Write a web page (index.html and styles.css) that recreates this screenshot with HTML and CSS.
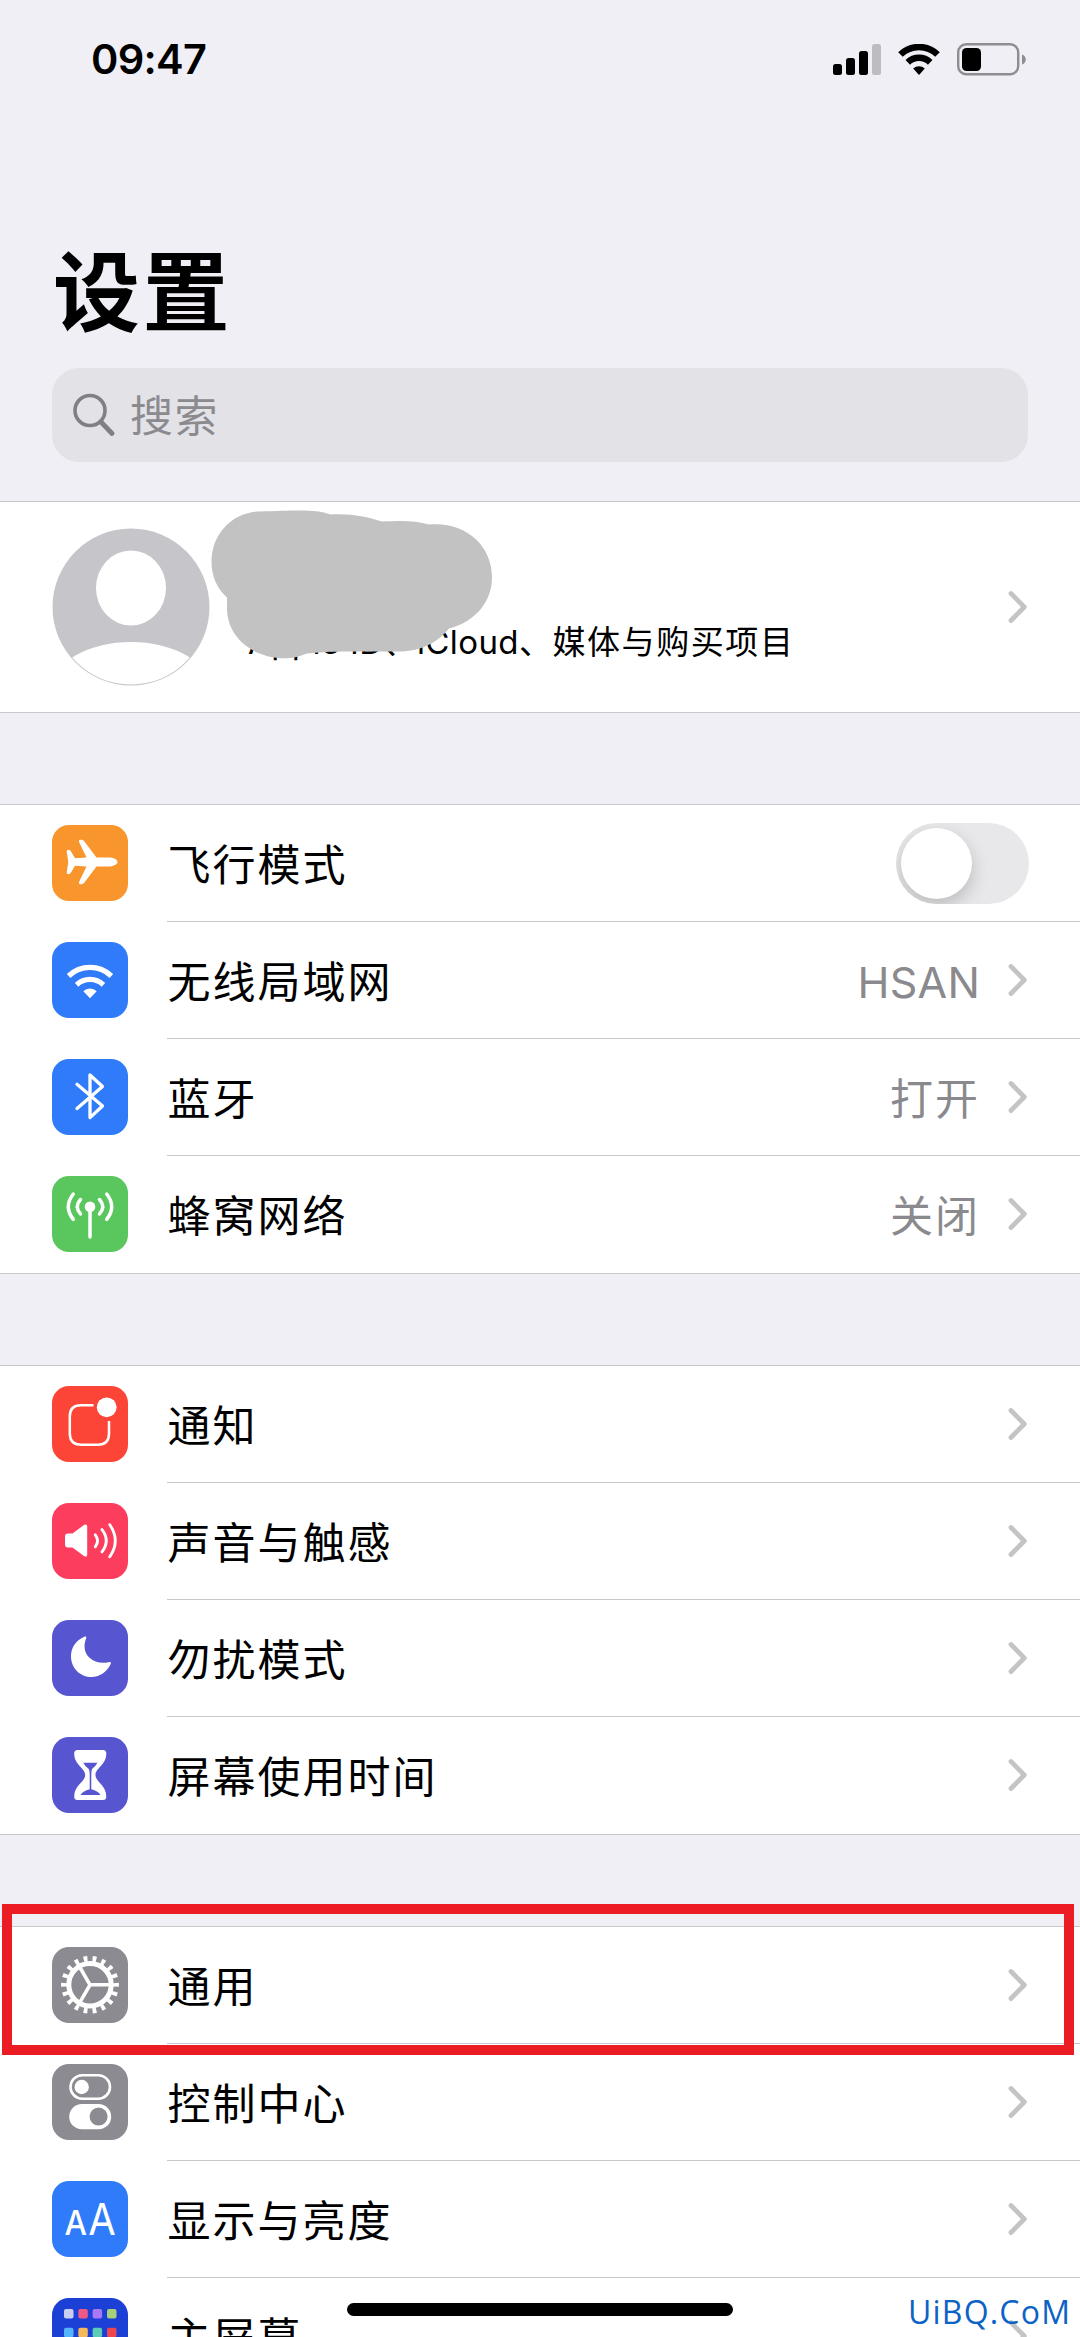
FILE: index.html
```html
<!DOCTYPE html>
<html lang="zh-CN">
<head>
<meta charset="utf-8">
<title>设置</title>
<link rel="stylesheet" href="styles.css">
</head>
<body>
<svg class="defs" aria-hidden="true">
  <symbol id="chevron" viewBox="0 0 20 34"><path d="M3 3.5 16.3 17 3 30.5" fill="none" stroke="#c4c4c6" stroke-width="4.8" stroke-linecap="round" stroke-linejoin="round"/></symbol>
</svg>
<div class="screen">
  <header class="header">
    <div class="status">
      <span class="time">09:47</span>
      <div class="status-icons">
        <svg class="signal" width="48" height="31" viewBox="0 0 48 31"><rect y="20" width="9" height="11" rx="2.5"/><rect x="13" y="14" width="9" height="17" rx="2.5"/><rect x="26" y="7" width="9" height="24" rx="2.5"/><rect x="39" width="9" height="31" rx="2.5" fill="#bdbdc1"/></svg>
        <svg class="wifi" width="42" height="31" viewBox="0 0 42 31"><g fill="none" stroke="#000" stroke-width="6.5"><path d="M2.5 10.500a26.500 26.500 0 0 1 37 0"/><path d="M9.800 18.300a16.200 16.200 0 0 1 22.400 0"/></g><path d="M15.200 24.600a8.600 8.600 0 0 1 11.600 0L21 31z"/></svg>
        <svg class="battery" width="69" height="33" viewBox="0 0 69 33"><rect x="1.2" y="1.2" width="60" height="30" rx="8" fill="none" stroke="#8e8e92" stroke-width="2.4"/><rect x="5" y="5" width="19" height="23" rx="4.5"/><path d="M65 11.500c5 1.500 5 8.500 0 10z" fill="#8e8e92"/></svg>
      </div>
    </div>
    <h1 class="title">设置</h1>
    <div class="search">
      <svg width="42" height="44" viewBox="0 0 42 44" fill="none" stroke="#808084" stroke-linecap="round"><circle cx="17" cy="17.500" r="15" stroke-width="3.600"/><path d="M28.500 29.500 39 40.500" stroke-width="4.800"/></svg>
      <span class="placeholder">搜索</span>
    </div>
  </header>

  <section class="profile">
    <svg class="avatar" width="158" height="158" viewBox="0 0 158 158"><defs><clipPath id="face"><circle cx="79" cy="79" r="77.600"/></clipPath></defs><circle cx="79" cy="79" r="78.500" fill="#c6c5ca"/><g clip-path="url(#face)" fill="#fff"><ellipse cx="79" cy="60" rx="35" ry="37.600"/><ellipse cx="79" cy="159" rx="78" ry="45"/></g></svg>
    <div class="account">Apple ID、iCloud、<span class="media">媒体与购买项目</span></div>
    <svg class="chev"><use href="#chevron"/></svg>
    <svg class="scribble" width="282" height="149" viewBox="211 509.500 282 149"><path d="M260 511C297 510 315 508.500 330.600 514C352 513 366 516 382 521C402 520 416 520 429 524C466 521 492 545 492 577C492 602 474 622 449 628C438 642 420 651 399.500 651H350C328 651 317 652 306.500 653C300 656 293 657.700 285 657.700C252 657.700 227 636 227 608V597C217 588 211.500 576 211.500 561C211.500 533 233 511 260 511Z" fill="#c2c2c2"/></svg>
  </section>

  <section class="group">
    <div class="row">
      <svg class="icon orange" viewBox="0 0 76 76"><path d="M15.500 25C17.500 24.500 18.500 25.500 19.300 27L23 33.300 34.500 32.600 27.300 17.500C26.500 15.500 27 14.800 28.500 14.800 30.500 14.800 31.500 15.300 32.600 16.800L44.500 32.600H58C62.500 33 65.500 35 65.500 37S62.500 41 58 41.400H44.500L32.600 57.200C31.500 58.700 30.500 59.200 28.500 59.200 27 59.200 26.500 58.500 27.300 56.500L34.500 41.400 23 40.700 19.300 47C18.500 48.500 17.500 49.500 15.500 49Q14.700 48.500 14.700 47.500L16.300 37 14.700 26.500Q14.700 25.500 15.500 25Z"/></svg>
      <div class="cell"><span class="label">飞行模式</span><span class="toggle"></span></div>
    </div>
    <div class="row">
      <svg class="icon blue" viewBox="0 0 76 76"><g fill="none" stroke="#fff" stroke-width="5.200"><path d="M16.600 34a31 31 0 0 1 42.800 0"/><path d="M24.600 42.800a19.500 19.500 0 0 1 26.800 0"/></g><path d="M31.300 49.200a9.500 9.500 0 0 1 13.400 0L38 56.300z"/></svg>
      <div class="cell"><span class="label">无线局域网</span><span class="value latin">HSAN</span><svg class="chev"><use href="#chevron"/></svg></div>
    </div>
    <div class="row">
      <svg class="icon blue" viewBox="0 0 76 76"><path d="M25 25.300 50.500 47 38 58.600V16L50.500 27.500 25 49.500" fill="none" stroke="#fff" stroke-width="3.300" stroke-linecap="round" stroke-linejoin="round"/></svg>
      <div class="cell"><span class="label">蓝牙</span><span class="value">打开</span><svg class="chev"><use href="#chevron"/></svg></div>
    </div>
    <div class="row">
      <svg class="icon green" viewBox="0 0 76 76"><circle cx="38" cy="30.700" r="5.300"/><g fill="none" stroke="#fff" stroke-width="3.500" stroke-linecap="round"><path d="M38 31V61"/><path d="M28.500 23.500q-6.500 7.200 0 14.400M47.500 23.500q6.500 7.200 0 14.400M21.300 18q-10 12.700 0 25.400M54.700 18q10 12.700 0 25.400"/></g></svg>
      <div class="cell"><span class="label">蜂窝网络</span><span class="value">关闭</span><svg class="chev"><use href="#chevron"/></svg></div>
    </div>
  </section>

  <section class="group">
    <div class="row">
      <svg class="icon red" viewBox="0 0 76 76"><path d="M41.500 19.300H29Q17.800 19.300 17.800 30.500V47.500Q17.800 58.700 29 58.700H46Q57 58.700 57 47.500V35" fill="none" stroke="#fff" stroke-width="2.500"/><circle cx="54.700" cy="21.300" r="9.900"/></svg>
      <div class="cell"><span class="label">通知</span><svg class="chev"><use href="#chevron"/></svg></div>
    </div>
    <div class="row">
      <svg class="icon pink" viewBox="0 0 76 76"><path d="M16 30.500H20.500L32.300 21.800Q35.200 20.500 35.200 23.300V51.700Q35.200 54.500 32.300 53.200L20.500 44.500H16Q13 44.500 13 41.500V33.500Q13 30.500 16 30.500Z"/><path d="M43.300 31.800q4.600 6 0 12M50 26.600q8.500 11.100 0 22.200M57.800 21.800q11 16 0 32" fill="none" stroke="#fff" stroke-width="2.900" stroke-linecap="round"/></svg>
      <div class="cell"><span class="label">声音与触感</span><svg class="chev"><use href="#chevron"/></svg></div>
    </div>
    <div class="row">
      <svg class="icon purple" viewBox="0 0 76 76"><path d="M32.800 16.600C24.500 19.800 19 27.200 19 36.200 19 48 28 57 39.700 57 48 57 55.500 51.500 58.800 43.800 59.300 42.300 58.500 41.600 57.200 42 44 45.500 32.500 37.500 32.500 26.500 32.500 23.500 33.300 20.500 34.200 18.200 34.600 16.900 34 16.200 32.800 16.600Z"/></svg>
      <div class="cell"><span class="label">勿扰模式</span><svg class="chev"><use href="#chevron"/></svg></div>
    </div>
    <div class="row">
      <svg class="icon purple" viewBox="0 0 76 76"><path d="M25.500 13H51Q54.300 13 54.300 16.500C54.300 28 43.500 31 43.500 38S54.300 48 54.300 59.500Q54.300 63 51 63H25.500Q22.200 63 22.200 59.500C22.200 48 33.200 45 33.200 38S22.200 28 22.200 16.500Q22.200 13 25.500 13Z"/><path d="M31.300 25.800H45.500Q43.500 29.500 40.300 31.800Q39.300 33 39.300 38.500V52.300Q46 54 48.500 58H28.500Q31 54 37.700 52.300V38.500Q37.700 33 36.500 31.800Q33 29.500 31.300 25.800Z" fill="#5855d0"/></svg>
      <div class="cell"><span class="label">屏幕使用时间</span><svg class="chev"><use href="#chevron"/></svg></div>
    </div>
  </section>

  <section class="group">
    <div class="row">
      <svg class="icon gray" viewBox="0 0 76 76"><g fill="none" stroke="#fff"><circle cx="38" cy="37.800" r="21.200" stroke-width="5"/><circle cx="38" cy="37.800" r="26" stroke-width="5.800" pathLength="180" stroke-dasharray="4.200 5.800" stroke-dashoffset="2.100"/><path d="M38 37.800H58M38 37.800 28 20.500M38 37.800 28 55.100" stroke-width="3.600"/></g></svg>
      <div class="cell"><span class="label">通用</span><svg class="chev"><use href="#chevron"/></svg></div>
    </div>
    <div class="row">
      <svg class="icon gray" viewBox="0 0 76 76"><rect x="18.500" y="11.200" width="39.500" height="23.500" rx="11.750" fill="none" stroke="#fff" stroke-width="2.600"/><circle cx="29.700" cy="23" r="7.200"/><rect x="17.200" y="40" width="42" height="25.300" rx="12.650"/><circle cx="46.600" cy="52.600" r="9" fill="#8c8b91"/></svg>
      <div class="cell"><span class="label">控制中心</span><svg class="chev"><use href="#chevron"/></svg></div>
    </div>
    <div class="row">
      <svg class="icon blue" viewBox="0 0 76 76"><text x="12.500" y="53.500" font-size="34" font-weight="500" textLength="22.500" lengthAdjust="spacingAndGlyphs">A</text><text x="36.300" y="53.500" font-size="43.500" textLength="27.500" lengthAdjust="spacingAndGlyphs">A</text></svg>
      <div class="cell"><span class="label">显示与亮度</span><svg class="chev"><use href="#chevron"/></svg></div>
    </div>
    <div class="row">
      <svg class="icon navy" viewBox="0 0 76 76"><rect x="12" y="11" width="9.500" height="9.500" rx="2" fill="#c9cdf0"/><rect x="26.300" y="11" width="9.500" height="9.500" rx="2" fill="#ee5a85"/><rect x="40.600" y="11" width="9.500" height="9.500" rx="2" fill="#a978f5"/><rect x="55" y="11" width="9.500" height="9.500" rx="2" fill="#a9cf78"/><rect x="12" y="29.700" width="9.500" height="9.500" rx="2" fill="#55b4fa"/><rect x="26.300" y="29.700" width="9.500" height="9.500" rx="2" fill="#f5b95a"/><rect x="40.600" y="29.700" width="9.500" height="9.500" rx="2" fill="#5acdb4"/><rect x="55" y="29.700" width="9.500" height="9.500" rx="2" fill="#f0464f"/></svg>
      <div class="cell"><span class="label">主屏幕</span><svg class="chev"><use href="#chevron"/></svg></div>
    </div>
  </section>

  <div class="highlight"></div>
  <div class="home-indicator"></div>
  <div class="watermark">UiBQ.CoM</div>
</div>
</body>
</html>
```
FILE: styles.css
```css
* { box-sizing: border-box; }
body { margin: 0; }
.defs { display: none; }
svg { display: block; flex: none; }

.screen {
  position: relative;
  width: 1080px;
  height: 2337px;
  overflow: hidden;
  background: #f0eff5;
  color: #000;
  font-family: Inter, "Noto Sans CJK SC", sans-serif;
}

.header { height: 501px; padding: 0 52px; }
.status {
  display: flex;
  justify-content: space-between;
  align-items: center;
  height: 118px;
  padding-left: 39px;
}
.time { font-size: 41.500px; font-weight: 600; letter-spacing: -0.700px; }
.status-icons { display: flex; align-items: center; margin-right: 2px; }
.wifi { margin-left: 17px; }
.battery { margin-left: 17px; }

.title {
  margin: 114px 0 0 1px;
  height: 124px;
  line-height: 124px;
  font-size: 87px;
  font-weight: 700;
  letter-spacing: 2.500px;
}
.search {
  display: flex;
  align-items: center;
  gap: 15px;
  height: 94px;
  margin-top: 12px;
  padding-left: 21px;
  border-radius: 27px;
  background: #e3e2e7;
  color: #8b8b8f;
  font-size: 43px;
  letter-spacing: 1.500px;
}
.placeholder { padding-bottom: 4px; }

.profile {
  position: relative;
  display: flex;
  align-items: center;
  height: 212px;
  padding: 0 51px 0 52px;
  background: #fff;
  border-top: 1px solid #c8c7cc;
  border-bottom: 1px solid #c8c7cc;
}
.account {
  flex: 1;
  margin: 70px 0 0 38px;
  font-size: 33px;
  line-height: 44px;
  letter-spacing: 0.400px;
  white-space: nowrap;
}
.media { letter-spacing: 1.600px; }
.scribble { position: absolute; left: 211px; top: 8px; }

.group {
  margin-top: 91.500px;
  background: #fff;
  border-top: 1px solid #c8c7cc;
}
.profile + .group { margin-top: 91px; }
.row { display: flex; height: 117.125px; padding-left: 52px; }
.icon {
  width: 76px;
  height: 76px;
  margin: 20px 39px 0 0;
  border-radius: 17px;
  fill: #fff;
  font-family: Inter, sans-serif;
}
.orange { background: #f8962d; }
.blue { background: #2f7bf9; }
.green { background: #59c65e; }
.red { background: #fd4537; }
.pink { background: #fc3d5e; }
.purple { background: #5855d0; }
.gray { background: #8c8b91; }
.navy { background: #1c3fd6; }

.cell {
  display: flex;
  flex: 1;
  align-items: center;
  padding-right: 51px;
  border-bottom: 1px solid #c8c7cc;
  font-size: 43px;
  letter-spacing: 2px;
}
.row:last-child { border-bottom: 1px solid #c8c7cc; }
.row:last-child .cell { border-bottom: 0; }
.label { flex: 1; padding: 0 0 2px 0.500px; }
.value { color: #8a8a8e; margin-right: 28px; padding-bottom: 2px; }
.latin { padding: 3px 0 0; letter-spacing: 0.200px; }
.chev { width: 20px; height: 34px; margin-right: 1px; }

.toggle {
  display: flex;
  width: 133px;
  height: 81px;
  padding: 5px;
  border-radius: 41px;
  background: #e8e8ea;
  overflow: hidden;
}
.toggle::before {
  content: "";
  width: 71px;
  height: 71px;
  border-radius: 50%;
  background: #fff;
  box-shadow: 0 7px 18px rgba(0, 0, 0, 0.200);
}

.highlight {
  position: absolute;
  left: 2px;
  top: 1904px;
  width: 1072px;
  height: 151px;
  border: 10px solid #ec1c24;
}
.home-indicator {
  position: absolute;
  left: 347px;
  top: 2303px;
  width: 386px;
  height: 13px;
  border-radius: 7px;
  background: #000;
}
.watermark {
  position: absolute;
  left: 908px;
  top: 2291px;
  color: #0b63c5;
  font: 32px/42px "Open Sans", "Noto Sans", sans-serif;
  letter-spacing: 1.200px;
}
```
